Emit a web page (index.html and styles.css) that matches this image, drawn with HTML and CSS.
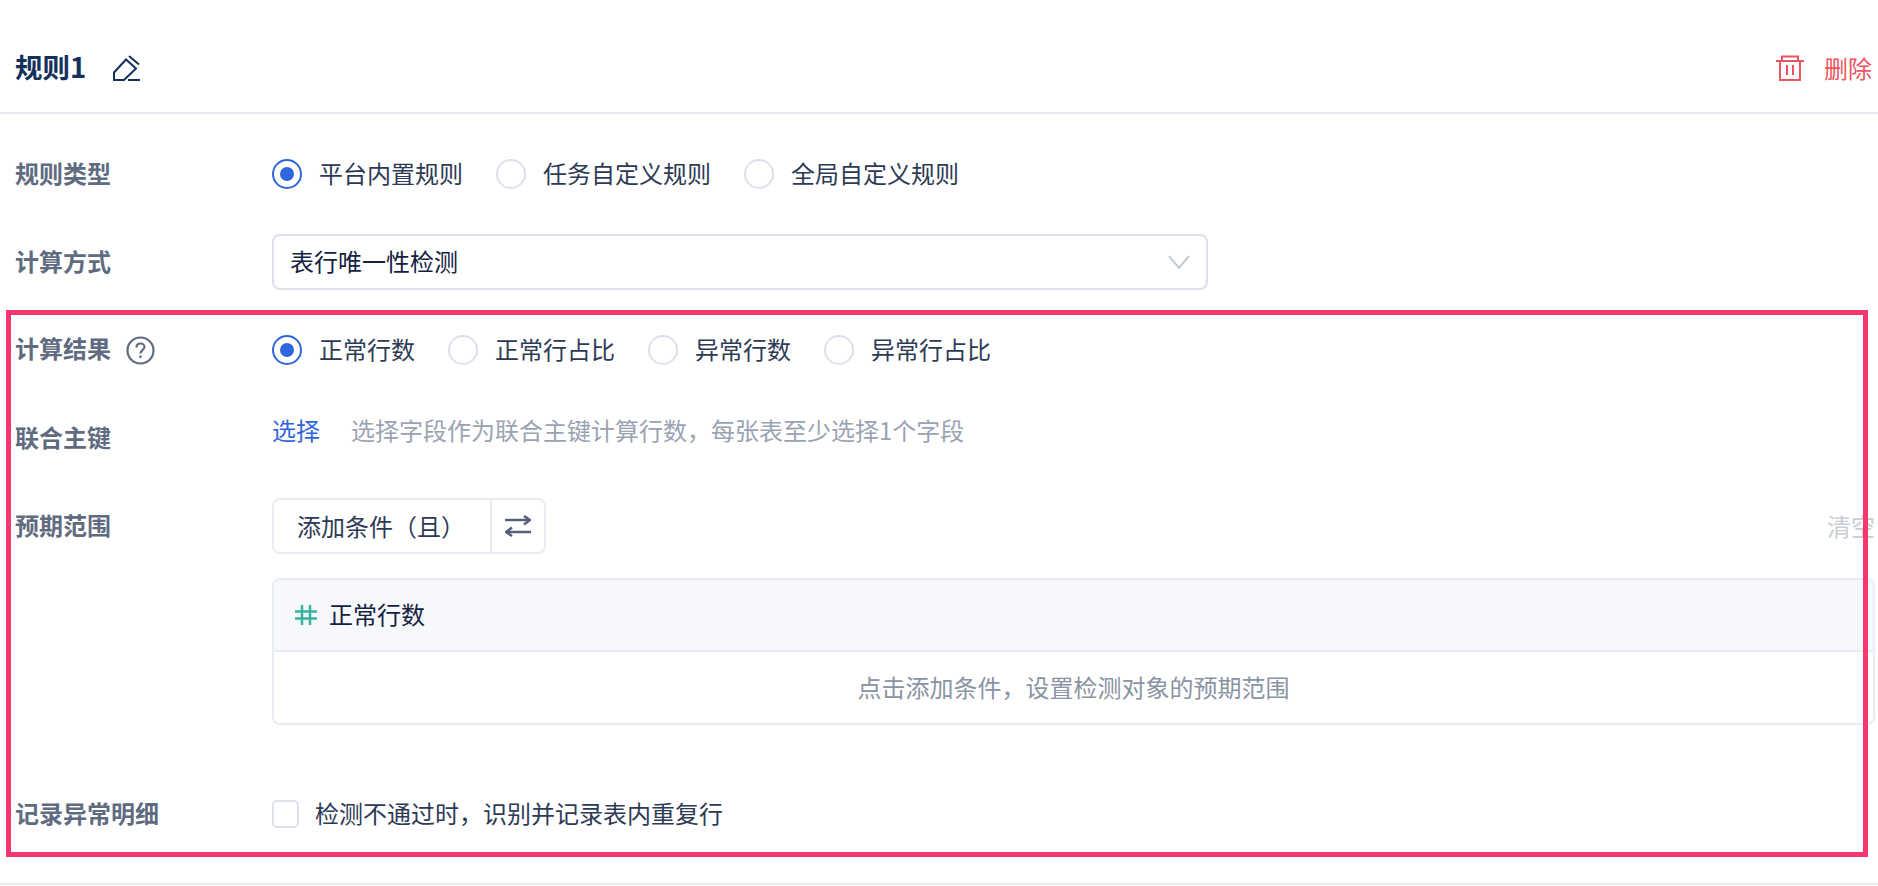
FILE: index.html
```html
<!DOCTYPE html>
<html lang="zh">
<head>
    <meta charset="UTF-8">
    <meta name="viewport" content="width=device-width, initial-scale=1.0">
    <title>规则1</title>
    <link rel="stylesheet" href="styles.css">
</head>
<body>
    <div class="rule-head">
        <div class="rule-title">
            <h2>规则1</h2>
            <svg class="edit-icon" viewBox="0 0 27 27" fill="none" stroke="currentColor" stroke-width="2">
                <path d="M1 25V17.500L13 4.500L23 13.500L11 25Z"/>
                <path d="M16 1L26 9.500"/>
                <path d="M15 25H27"/>
            </svg>
        </div>
        <div class="rule-delete">
            <svg class="trash-icon" viewBox="0 0 28 26" fill="none" stroke="currentColor" stroke-width="2">
                <path d="M0 6H28"/>
                <path d="M6 6V1.500H22V6"/>
                <path d="M4 6V25H24V6"/>
                <path d="M11 10V20M17 10V20"/>
            </svg>
            <span>删除</span>
        </div>
    </div>

    <div class="rule-form">
        <div class="form-row">
            <div class="form-label">规则类型</div>
            <div class="radio-group">
                <div class="radio-item"><span class="radio checked"></span><span class="item-text">平台内置规则</span></div>
                <div class="radio-item"><span class="radio"></span><span class="item-text">任务自定义规则</span></div>
                <div class="radio-item"><span class="radio"></span><span class="item-text">全局自定义规则</span></div>
            </div>
        </div>

        <div class="form-row">
            <div class="form-label">计算方式</div>
            <div class="select-box">
                <span class="item-text">表行唯一性检测</span>
                <svg class="chevron" viewBox="0 0 22 14" fill="none" stroke="currentColor" stroke-width="2">
                    <path d="M1 1L11 13L21 1"/>
                </svg>
            </div>
        </div>

        <div class="form-row">
            <div class="form-label">
                <span class="item-text">计算结果</span>
                <svg class="help-icon" viewBox="0 0 29 29" fill="none" stroke="currentColor" stroke-width="2.200">
                    <circle cx="14.500" cy="14.500" r="13"/>
                    <path d="M10.500 11.500C10.500 9 12.300 7.500 14.500 7.500C16.800 7.500 18.500 9 18.500 11C18.500 13.800 14.500 14 14.500 17.500"/>
                    <path d="M14.500 19.500V22"/>
                </svg>
            </div>
            <div class="radio-group">
                <div class="radio-item"><span class="radio checked"></span><span class="item-text">正常行数</span></div>
                <div class="radio-item"><span class="radio"></span><span class="item-text">正常行占比</span></div>
                <div class="radio-item"><span class="radio"></span><span class="item-text">异常行数</span></div>
                <div class="radio-item"><span class="radio"></span><span class="item-text">异常行占比</span></div>
            </div>
        </div>

        <div class="form-row">
            <div class="form-label">联合主键</div>
            <div class="key-select">
                <a class="link item-text">选择</a>
                <span class="hint item-text">选择字段作为联合主键计算行数，每张表至少选择1个字段</span>
            </div>
        </div>

        <div class="form-row range-row">
            <div class="form-label">预期范围</div>
            <div class="range-body">
                <div class="range-tools">
                    <div class="btn-group">
                        <div class="btn-add">添加条件（且）</div>
                        <div class="btn-swap">
                            <svg class="swap-icon" viewBox="0 0 26 22" fill="none" stroke="currentColor" stroke-width="2.500">
                                <path d="M0 5H25"/>
                                <path d="M19 1L25 5L19 9.500"/>
                                <path d="M26 17H1"/>
                                <path d="M7 12.500L1 17L7 21"/>
                            </svg>
                        </div>
                    </div>
                    <span class="clear-btn">清空</span>
                </div>
                <div class="range-table">
                    <div class="range-head">
                        <svg class="hash-icon" viewBox="0 0 22 20" fill="none" stroke="currentColor" stroke-width="2.500">
                            <path d="M7 0V20M15 0V20M0 6.500H22M0 13.500H22"/>
                        </svg>
                        <span class="item-text">正常行数</span>
                    </div>
                    <div class="range-empty">点击添加条件，设置检测对象的预期范围</div>
                </div>
            </div>
        </div>

        <div class="form-row">
            <div class="form-label">记录异常明细</div>
            <div class="check-item"><span class="checkbox"></span><span class="item-text">检测不通过时，识别并记录表内重复行</span></div>
        </div>
    </div>

    <div class="rule-foot"></div>

    <!-- 标注框 -->
    <div class="mark-box"></div>
</body>
</html>
```

FILE: styles.css
```css
html, body {
    height: 100%;
}

body {
    position: relative;
    margin: 0;
    overflow: hidden;
    background: #fff;
    color: #2d3a55;
    font-family: "Noto Sans CJK SC", sans-serif;
    font-size: 24px;
    line-height: 1.4;
}

/* 字形偏低，往上提一点 */
.item-text {
    margin-bottom: 2px;
}

.rule-head {
    display: flex;
    align-items: center;
    justify-content: space-between;
    height: 88px;
    padding: 24px 6px 0 15px;
    border-bottom: 2px solid #e6e9ef;
}

.rule-title {
    display: flex;
    align-items: center;
    gap: 27px;
    color: #14305c;
}

.rule-title h2 {
    margin: 0 0 3px;
    font-size: 27.500px;
    font-weight: 700;
}

.edit-icon {
    width: 27px;
    height: 27px;
}

.rule-delete {
    display: flex;
    align-items: center;
    gap: 20px;
    color: #ec5560;
}

.trash-icon {
    width: 28px;
    height: 26px;
}

.rule-form {
    display: flex;
    flex-direction: column;
    gap: 32px;
    padding: 32px 3px 0 15px;
}

.form-row {
    display: flex;
    min-height: 56px;
}

.range-row {
    margin-bottom: 29px;
}

.form-label {
    display: flex;
    align-items: center;
    flex: none;
    gap: 15px;
    width: 257px;
    height: 56px;
    padding-bottom: 2px;
    box-sizing: border-box;
    color: #5f6b80;
    font-weight: 700;
}

.help-icon {
    width: 29px;
    height: 29px;
    margin-top: 2px;
}

.radio-group {
    display: flex;
    align-items: center;
    gap: 33px;
}

.radio-item {
    display: flex;
    align-items: center;
    gap: 17px;
}

.radio {
    position: relative;
    width: 30px;
    height: 30px;
    box-sizing: border-box;
    border: 2px solid #dce0e9;
    border-radius: 50%;
}

.radio.checked {
    border-color: #2f66de;
}

.radio.checked::after {
    content: "";
    position: absolute;
    top: 6px;
    left: 6px;
    width: 14px;
    height: 14px;
    border-radius: 50%;
    background: #2f66de;
}

.select-box {
    display: flex;
    align-items: center;
    justify-content: space-between;
    width: 936px;
    height: 56px;
    padding: 0 16px;
    box-sizing: border-box;
    border: 2px solid #dce0e9;
    border-radius: 8px;
    color: #14223f;
}

.chevron {
    width: 22px;
    height: 14px;
    color: #c3c9d4;
}

.key-select {
    display: flex;
    gap: 31px;
    height: 42px;
    align-items: center;
}

.link {
    color: #2f66de;
}

.hint {
    color: #9aa3b2;
}

.range-body {
    flex: 1;
}

.range-tools {
    display: flex;
    align-items: center;
    justify-content: space-between;
    margin-bottom: 24px;
}

.btn-group {
    display: flex;
    width: 274px;
    height: 56px;
    box-sizing: border-box;
    border: 2px solid #e9ecf2;
    border-radius: 8px;
}

.btn-add {
    display: flex;
    align-items: center;
    width: 218px;
    padding-left: 23px;
    box-sizing: border-box;
    border-right: 2px solid #e9ecf2;
}

.btn-swap {
    display: flex;
    align-items: center;
    justify-content: center;
    flex: 1;
    color: #55617a;
}

.swap-icon {
    width: 26px;
    height: 22px;
}

.clear-btn {
    color: #c8cdd6;
}

.range-table {
    border: 2px solid #e9ecf2;
    border-radius: 8px;
}

.range-head {
    display: flex;
    align-items: center;
    gap: 12px;
    height: 70px;
    padding-left: 21px;
    border-bottom: 2px solid #e9ecf2;
    border-radius: 6px 6px 0 0;
    background: #f7f8fb;
    color: #14223f;
}

.hash-icon {
    width: 22px;
    height: 20px;
    color: #35b3a0;
}

.range-empty {
    height: 71px;
    padding-bottom: 2px;
    box-sizing: border-box;
    line-height: 69px;
    text-align: center;
    color: #8a93a3;
}

.check-item {
    display: flex;
    align-items: center;
    gap: 16px;
}

.checkbox {
    width: 27px;
    height: 28px;
    box-sizing: border-box;
    border: 2px solid #dce0e9;
    border-radius: 5px;
}

.rule-foot {
    margin-top: 41px;
    border-bottom: 2px solid #e6e9ef;
}

.mark-box {
    position: absolute;
    top: 310px;
    left: 6px;
    width: 1862px;
    height: 547px;
    box-sizing: border-box;
    border: 5px solid #f6366f;
}
```
